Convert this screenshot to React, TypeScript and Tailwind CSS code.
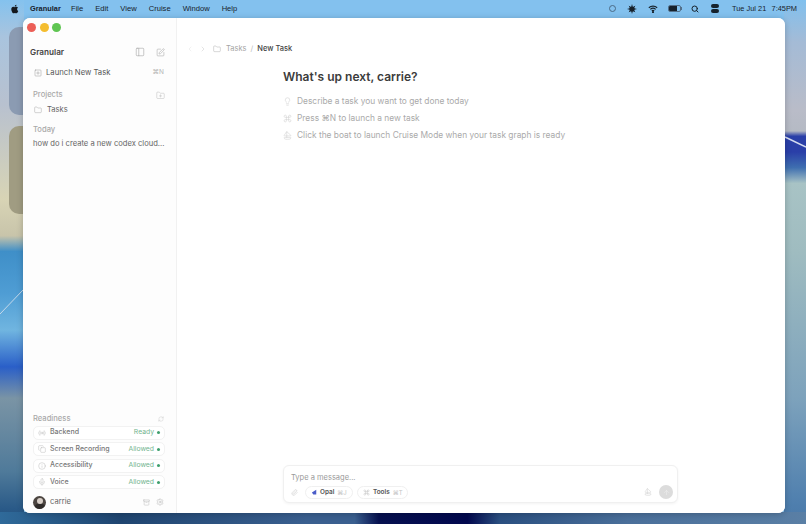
import {
  Archive,
  ChevronLeft,
  ChevronRight,
  Command,
  Copy,
  Folder,
  FolderPlus,
  Lightbulb,
  Mic,
  Paperclip,
  PanelLeft,
  RefreshCw,
  Sailboat,
  Search,
  Settings,
  SquarePen,
  SquarePlus,
  Info,
  Radio,
  ArrowUp,
} from "lucide-react";

const AppleLogo = () => (
  <svg viewBox="0 0 24 24" className="h-[10px] w-[10px] fill-[#14181d]">
    <path d="M17.05 12.54c-.03-2.6 2.12-3.85 2.22-3.91-1.21-1.77-3.09-2.01-3.76-2.04-1.6-.16-3.12.94-3.93.94-.81 0-2.06-.92-3.39-.89-1.74.03-3.35 1.01-4.25 2.57-1.81 3.14-.46 7.8 1.3 10.35.86 1.25 1.89 2.65 3.24 2.6 1.3-.05 1.79-.84 3.36-.84s2.01.84 3.39.81c1.4-.02 2.28-1.27 3.14-2.53.99-1.45 1.4-2.86 1.42-2.93-.03-.01-2.72-1.04-2.74-4.13zM14.47 4.9c.72-.87 1.2-2.08 1.07-3.29-1.03.04-2.29.69-3.03 1.55-.66.77-1.24 2-1.09 3.18 1.15.09 2.33-.58 3.05-1.44z" />
  </svg>
);

const WifiGlyph = () => (
  <svg viewBox="0 0 12 10" className="h-[8px] w-[10px]" fill="none" stroke="#17222c" strokeWidth="1.5">
    <path d="M.8 3.4a7.6 7.6 0 0 1 10.4 0" />
    <path d="M2.7 5.4a4.8 4.8 0 0 1 6.6 0" />
    <path d="M4.5 7.3a2.2 2.2 0 0 1 3 0" />
    <circle cx="6" cy="8.9" r=".6" fill="#17222c" />
  </svg>
);

const menuItems = ["File", "Edit", "View", "Cruise", "Window", "Help"];

const MenuBar = () => (
  <div className="flex h-[18px] items-center justify-between pl-[10px] pr-[9px] font-['Liberation_Sans',sans-serif] text-[#17222c]">
    <div className="flex items-center">
      <AppleLogo />
      <span className="ml-[10px] w-[30px] whitespace-nowrap text-[7.4px] font-bold">Granular</span>
      <div className="ml-[11px] flex gap-[12px] text-[7.6px]">
        {menuItems.map((m) => (
          <span key={m}>{m}</span>
        ))}
      </div>
    </div>
    <div className="flex items-center">
      <div className="h-[7px] w-[7px] rounded-full border border-[#4a6a85]" />
      <svg viewBox="0 0 12 12" className="ml-[11px] h-[10px] w-[10px]">
        <circle cx="6" cy="6" r="3.4" fill="#17222c" />
        <path d="M6 .8v2.4M6 8.8v2.4M.8 6h2.4M8.8 6h2.4M2.3 2.3 4 4M8 8l1.7 1.7M9.7 2.3 8 4M4 8 2.3 9.7" stroke="#17222c" strokeWidth="1" />
      </svg>
      <div className="ml-[11px]">
        <WifiGlyph />
      </div>
      <div className="ml-[10px] flex items-center">
        <div className="flex h-[7px] w-[13px] items-center overflow-hidden rounded-[2px] border border-[#53708a]">
          <div className="h-full w-[8px] bg-[#17222c]" />
        </div>
        <div className="h-[3px] w-[1px] bg-[#53708a]" />
      </div>
      <Search className="ml-[9px] h-[8px] w-[8px]" strokeWidth={3} />
      <div className="ml-[12px] flex h-[9px] w-[8px] flex-col gap-[1px]">
        <div className="h-[4px] rounded-[2px] bg-[#17222c]" />
        <div className="h-[4px] rounded-[2px] bg-[#17222c]" />
      </div>
      <span className="ml-[13px] w-[34px] whitespace-nowrap text-[7.4px]">Tue Jul 21</span>
      <span className="ml-[5px] w-[26px] whitespace-nowrap text-right text-[7.4px]">7:45PM</span>
    </div>
  </div>
);

const readiness = [
  { name: "Backend", status: "Ready", Icon: Radio },
  { name: "Screen Recording", status: "Allowed", Icon: Copy },
  { name: "Accessibility", status: "Allowed", Icon: Info },
  { name: "Voice", status: "Allowed", Icon: Mic },
];

const Sidebar = () => (
  <aside className="flex w-[154px] shrink-0 flex-col border-r border-[#f1f1f1] bg-[#fdfdfd]">
    <div className="flex h-[18px] items-center gap-[3.5px] pl-[4px] pt-[1px]">
      <div className="h-[9px] w-[9px] rounded-full bg-[#ec5f57]" />
      <div className="h-[9px] w-[9px] rounded-full bg-[#f4bd2f]" />
      <div className="h-[9px] w-[9px] rounded-full bg-[#5fc552]" />
    </div>
    <div className="mt-[8px] flex h-[16px] items-center justify-between pl-[7px] pr-[11px]">
      <span className="text-[8.2px] font-semibold text-[#444]">Granular</span>
      <div className="flex items-center gap-[11px] text-[#a8a8a8]">
        <PanelLeft className="h-[10px] w-[10px]" strokeWidth={1.5} />
        <SquarePen className="h-[9px] w-[9px]" strokeWidth={1.5} />
      </div>
    </div>
    <div className="mt-[6px] flex h-[14px] items-center pl-[11px] pr-[12px]">
      <SquarePlus className="h-[8px] w-[8px] text-[#999]" strokeWidth={1.5} />
      <span className="ml-[4px] text-[7.7px] text-[#555]">Launch New Task</span>
      <span className="ml-auto text-[6.5px] text-[#b5b5b5]">⌘N</span>
    </div>
    <div className="mt-[8px] flex h-[14px] items-center justify-between pl-[10px] pr-[11px]">
      <span className="text-[7.6px] font-medium text-[#a9a9a9]">Projects</span>
      <FolderPlus className="h-[9px] w-[9px] text-[#c4c4c4]" strokeWidth={1.5} />
    </div>
    <div className="flex h-[15px] items-center pl-[11px]">
      <Folder className="h-[8px] w-[8px] text-[#a8a8a8]" strokeWidth={1.5} />
      <span className="ml-[5px] text-[7.6px] text-[#666]">Tasks</span>
    </div>
    <div className="mt-[6px] flex h-[14px] items-center pl-[10px]">
      <span className="text-[7.6px] font-medium text-[#a9a9a9]">Today</span>
    </div>
    <div className="flex h-[14px] items-center pl-[10px]">
      <span className="whitespace-nowrap text-[7.6px] text-[#666]">how do i create a new codex cloud...</span>
    </div>

    <div className="mt-auto flex h-[12px] items-center justify-between pl-[10px] pr-[12px]">
      <span className="text-[7.6px] font-medium text-[#a9a9a9]">Readiness</span>
      <RefreshCw className="h-[6px] w-[6px] text-[#c4c4c4]" strokeWidth={1.5} />
    </div>
    <div className="ml-[10px] mr-[11px] mt-[0.5px] flex flex-col gap-[2.5px]">
      {readiness.map(({ name, status, Icon }) => (
        <div key={name} className="flex h-[14px] items-center rounded-[5px] border border-[#f2f2f2] bg-white pl-[4px] pr-[4px]">
          <div className="flex w-[12px] justify-start">
            <Icon className="h-[8px] w-[8px] text-[#bdbdbd]" strokeWidth={1.5} />
          </div>
          <span className="whitespace-nowrap text-[7px] font-medium text-[#777]">{name}</span>
          <span className="ml-auto text-[6.8px] text-[#74b58f]">{status}</span>
          <div className="ml-[3px] h-[3px] w-[3px] rounded-full bg-[#3f9f6d]" />
        </div>
      ))}
    </div>
    <div className="flex h-[24px] items-center pl-[10px] pr-[12px] pt-[2px]">
      <div className="relative h-[13px] w-[13px] overflow-hidden rounded-full bg-[#4c4541]">
        <div className="absolute left-[3.5px] top-[2px] h-[6px] w-[6px] rounded-full bg-[#d8cfc8]" />
        <div className="absolute left-[1.5px] top-[8px] h-[6px] w-[10px] rounded-full bg-[#2e2a28]" />
      </div>
      <span className="ml-[4px] text-[7.6px] text-[#666]">carrie</span>
      <div className="ml-auto flex items-center gap-[6px] text-[#b5b5b5]">
        <Archive className="h-[7px] w-[7px]" strokeWidth={1.5} />
        <Settings className="h-[8px] w-[8px]" strokeWidth={1.5} />
      </div>
    </div>
  </aside>
);

const tips = [
  { text: "Describe a task you want to get done today", Icon: Lightbulb },
  { text: "Press ⌘N to launch a new task", Icon: Command },
  { text: "Click the boat to launch Cruise Mode when your task graph is ready", Icon: Sailboat },
];

const Composer = () => (
  <div className="mb-[10px] ml-[106px] mt-auto h-[38px] w-[395px] rounded-[6px] border border-[#f0f0f0] bg-white pl-[7px] pr-[4px] shadow-[0_1px_3px_rgba(0,0,0,0.05)]">
    <div className="pt-[6px] text-[7.5px] leading-[12px] text-[#9a9a9a]">Type a message...</div>
    <div className="mt-[1px] flex items-center">
      <Paperclip className="h-[7px] w-[7px] text-[#c4c4c4]" strokeWidth={1.5} />
      <div className="ml-[7px] flex h-[13px] w-[48px] items-center rounded-full border border-[#f0f0f0] pl-[5px]">
        <svg viewBox="0 0 8 8" className="h-[6px] w-[6px]">
          <path d="M7 1 1.2 4.6 3 7.4h4z" fill="#4a5cc8" />
        </svg>
        <span className="ml-[3px] pt-[1px] text-[6.4px] font-semibold text-[#555]">Opal</span>
        <span className="ml-[3px] whitespace-nowrap pt-[1px] text-[6px] text-[#c4c4c4]">⌘J</span>
      </div>
      <div className="ml-[4px] flex h-[13px] w-[51px] items-center rounded-full border border-[#f0f0f0] pl-[5px]">
        <Command className="h-[7px] w-[7px] text-[#bdbdbd]" strokeWidth={1.5} />
        <span className="ml-[3px] pt-[1px] text-[6.4px] font-semibold text-[#555]">Tools</span>
        <span className="ml-[3px] whitespace-nowrap pt-[1px] text-[6px] text-[#c4c4c4]">⌘T</span>
      </div>
      <Sailboat className="ml-auto h-[8px] w-[8px] text-[#cfcfcf]" strokeWidth={1.5} />
      <div className="ml-[7px] flex h-[14px] w-[14px] items-center justify-center rounded-full bg-[#dcdcdc]">
        <ArrowUp className="h-[7px] w-[7px] text-[#eee]" strokeWidth={2} />
      </div>
    </div>
  </div>
);

const Main = () => (
  <main className="flex min-w-0 flex-1 flex-col bg-white">
    <div className="mt-[24px] flex h-[14px] items-center pl-[9px] text-[7.5px]">
      <ChevronLeft className="h-[8px] w-[8px] text-[#e2e2e2]" strokeWidth={1.5} />
      <ChevronRight className="ml-[5px] h-[8px] w-[8px] text-[#c9c9c9]" strokeWidth={1.5} />
      <Folder className="ml-[6px] h-[8px] w-[8px] text-[#b0b0b0]" strokeWidth={1.5} />
      <span className="ml-[5px] text-[#a5a5a5]">Tasks</span>
      <span className="ml-[4px] text-[#bbb]">/</span>
      <span className="ml-[4px] font-medium text-[#444]">New Task</span>
    </div>
    <div className="ml-[106px] mt-[11px]">
      <h1 className="text-[12px] font-semibold leading-[20px] text-[#3c3c3c]">What's up next, carrie?</h1>
      <div className="mt-[7px] flex flex-col gap-[3px]">
        {tips.map(({ text, Icon }) => (
          <div key={text} className="flex h-[14px] items-center">
            <Icon className="h-[9px] w-[9px] text-[#d0d0d0]" strokeWidth={1.5} />
            <span className="ml-[5px] text-[8.4px] text-[#aaa]">{text}</span>
          </div>
        ))}
      </div>
    </div>
    <Composer />
  </main>
);

export default function App() {
  return (
    <div className="relative h-[524px] w-[806px] overflow-hidden bg-[#83c1ee] font-['Inter','Liberation_Sans',sans-serif]">
      {/* desktop wallpaper, behind the window */}
      <div className="absolute left-0 top-0 h-[524px] w-[24px] bg-[linear-gradient(180deg,#84c2ee_0%,#a9c4de_7%,#b8c1cf_20%,#d8d4b5_38%,#c8c4aa_45%,#3f8fc8_48%,#4f9dd4_56%,#70b5e0_63%,#2a5fc8_70%,#7a94a5_76%,#4f7a9a_90%,#2a5a88_97%,#22507f_100%)]" />
      <div className="absolute right-0 top-0 h-[524px] w-[22px] bg-[linear-gradient(180deg,#80c0ee_0%,#a4bbd6_8%,#b9bcc8_21%,#b5bac4_25%,#2a3fa8_26%,#2a3fa8_29%,#3f6fb0_32%,#a8c3c5_35%,#9fbcc0_48%,#7da2bc_76%,#4f7fae_96%,#4a78a8_100%)]" />
      <div className="absolute bottom-0 left-0 h-[12px] w-[806px] bg-[linear-gradient(90deg,#2f6a9a_0%,#1f4570_15%,#3a5f8f_38%,#3a5f8f_44%,#06104f_47%,#02084e_58%,#2a4f80_62%,#4a6f9a_78%,#5a7fa5_100%)]" />
      <div className="absolute left-[9px] top-[27px] h-[88px] w-[15px] rounded-l-[10px] bg-[#8b9bb2]" />
      <div className="absolute left-[9px] top-[126px] h-[88px] w-[15px] rounded-l-[10px] bg-[#a09c82]" />
      <svg className="absolute left-0 top-0 h-[524px] w-[806px]" viewBox="0 0 806 524" fill="none">
        <path d="M0 314 23 290" stroke="#c4d8ea" strokeWidth="1" />
        <path d="M785 137 806 147" stroke="#d5dcf0" strokeWidth="1.5" />
      </svg>
      <div className="relative flex h-full flex-col">
        <MenuBar />
        <div className="ml-[23px] flex h-[495px] w-[762px] overflow-hidden rounded-[7px] bg-white shadow-[0_1px_6px_rgba(0,0,0,0.22)]">
          <Sidebar />
          <Main />
        </div>
      </div>
    </div>
  );
}
